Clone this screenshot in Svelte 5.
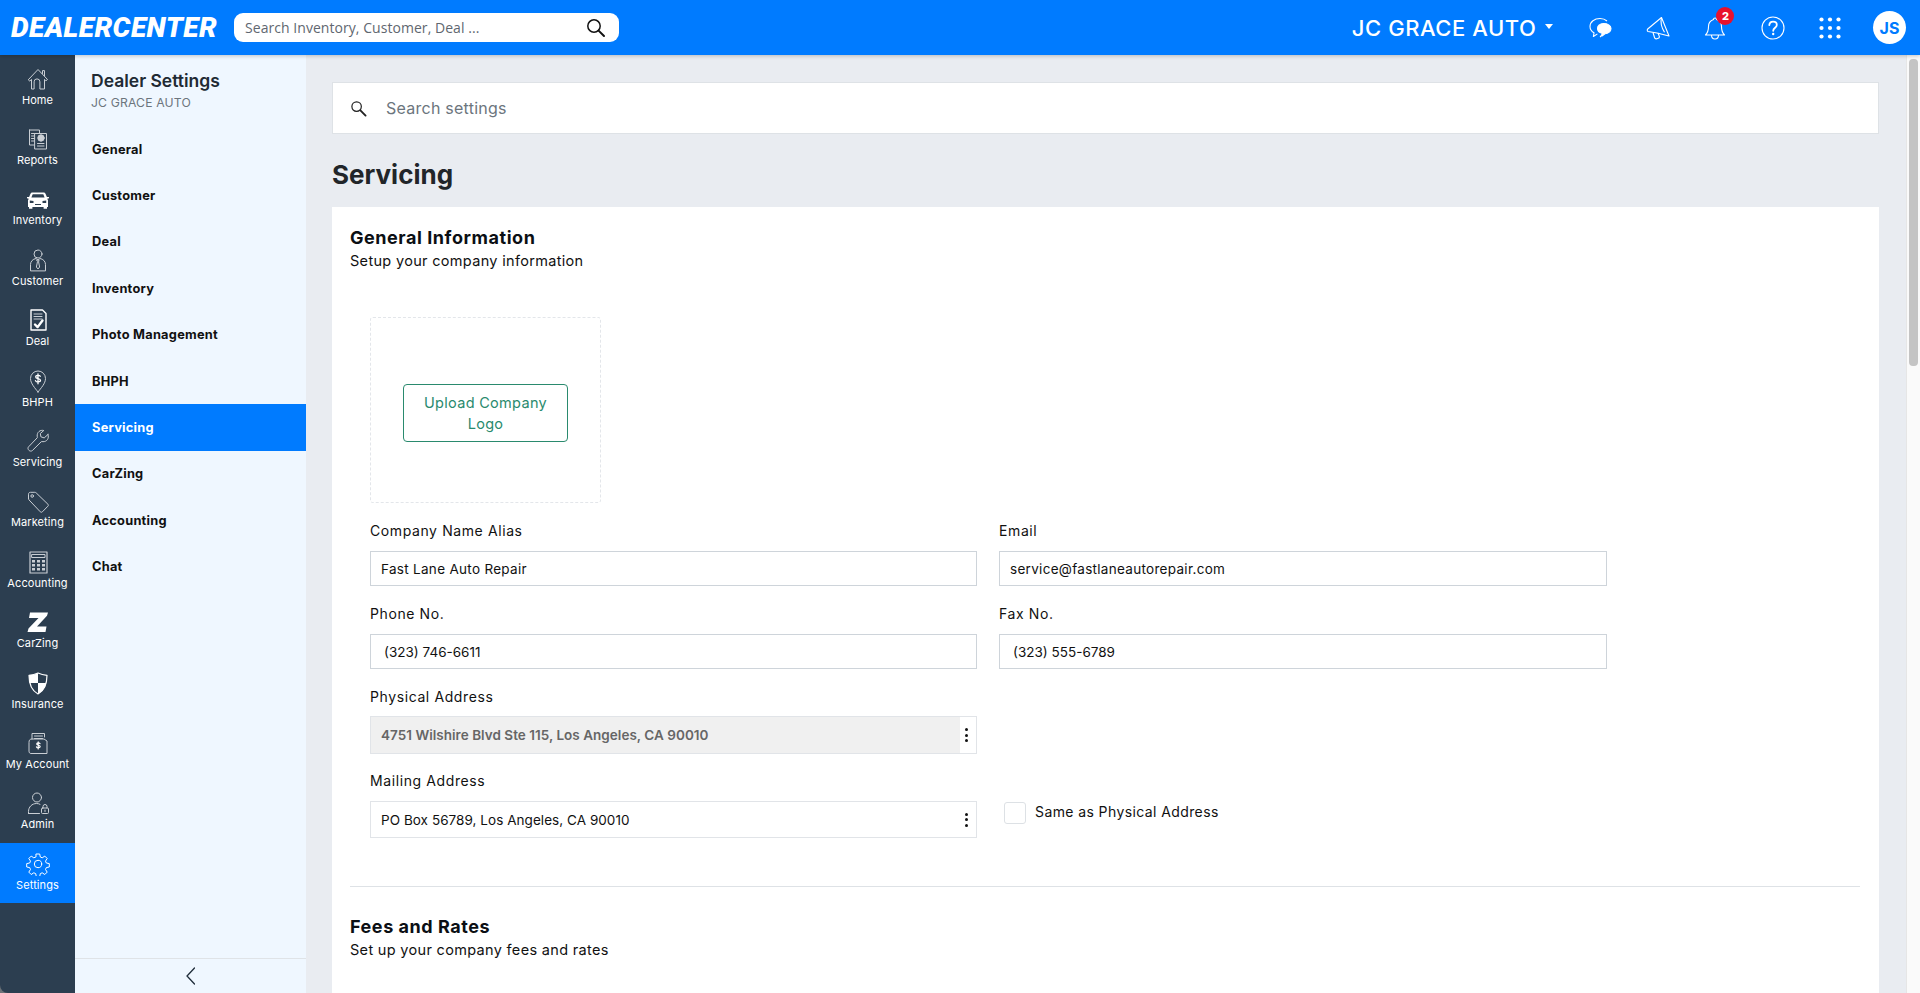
<script>
  const rail = [
    ['home','Home'],['reports','Reports'],['car','Inventory'],['customer','Customer'],['deal','Deal'],
    ['bhph','BHPH'],['wrench','Servicing'],['tag','Marketing'],['calc','Accounting'],['z','CarZing'],
    ['shield','Insurance'],['account','My Account'],['admin','Admin'],['gear','Settings']
  ];
  const menu = ['General','Customer','Deal','Inventory','Photo Management','BHPH','Servicing','CarZing','Accounting','Chat'];
</script>

{#snippet icon(n)}
  <svg class="ri" viewBox="0 0 24 24" fill="none" stroke="currentColor" stroke-width="1" stroke-linejoin="round" stroke-linecap="round">
    {#if n==='home'}
      <path d="M2.500 12.500 12 2.500l9.500 10-1.600 1.300-1.400-1.400V22h-4.600v-7.200a2.900 2.900 0 0 0-5.800 0V22H5.500v-9.600l-1.400 1.400z"/>
      <path d="M16.500 6.500V3.600h2v5"/>
    {:else if n==='reports'}
      <path d="M3.500 3h10v3.500M3.500 3v15H8"/>
      <path d="M5.500 6.500h3M5.500 9h3M5.500 11.500h3M5.500 14h3"/>
      <path d="M9 6.500h11.500V22H9z"/>
      <circle cx="15" cy="11" r="3.200" fill="currentColor"/>
      <path d="M11.500 16.500h6.500M11.500 19h6.500"/>
    {:else if n==='car'}
      <path fill="#fff" stroke="none" d="M6.200 4.500h11.600c.8 0 1.400.4 1.700 1.200l1.400 3.300h2.100v1.300l-1.800.4.800 1.500V19h-1v1.800h-3.400V19H6.400v1.800H3V19H2v-6.800l.8-1.500-1.800-.4V9h2.100l1.400-3.300c.3-.8.900-1.200 1.700-1.200z"/>
      <path fill="#2c3e50" stroke="none" d="M6.700 6.200h10.600l1.300 3.300H5.400zM3.800 12.500l3.700.5v2H3.800zM20.200 12.500l-3.700.5v2h3.700zM9 16h6v1H9z"/>
    {:else if n==='customer'}
      <circle cx="12" cy="6" r="4"/>
      <path d="M4.500 22.500v-6c0-3 2.300-5.500 5.500-6l2 1.500 2-1.500c3.200.5 5.500 3 5.500 6v6z"/>
      <path d="M11 12h2l-.4 2 1 5-1.600 2-1.600-2 1-5z"/>
    {:else if n==='deal'}
      <path stroke="#fff" stroke-width="1.400" d="M5 2h11.500L20 5.500V22H5z"/>
      <path d="M8 6h8M8 8.500h8M8 11h8"/>
      <path stroke="#fff" stroke-width="2.400" d="M9 16.500l2.600 2.600L16.500 12.500"/>
    {:else if n==='bhph'}
      <path d="M12 23C9 19 4.500 14.500 4.500 9.500a7.500 7.500 0 0 1 15 0C19.500 14.500 15 19 12 23z"/>
      <path stroke="#fff" stroke-width="1.300" d="M14.300 7.300c-.4-.7-1.200-1-2.300-1-1.300 0-2.300.6-2.300 1.600 0 2.200 4.800 1.200 4.800 3.400 0 1-1 1.600-2.500 1.600-1.300 0-2.100-.4-2.500-1.200M12 4.800v10"/>
    {:else if n==='wrench'}
      <path d="M22 5.500l-3.800 3.400-3.300-1.100-.6-3.300L17.800 1.500c-3.600-.9-7 1.700-6.600 5.700.1.700.2 1.200.1 1.500L2.600 17.800c-1.200 1.200-.5 2.700.3 3.500s2.400 1.200 3.500.2l8.900-8.800c.3-.2 1-.1 1.700 0 3.700.2 6.500-3.300 5-7.200z"/>
    {:else if n==='tag'}
      <path d="M2.500 8.500V4.200C2.500 3 3.300 2.300 4.500 2.300h4.300c.6 0 1 .2 1.400.6l11.700 11.300c.6.600.6 1.400 0 2l-5.500 5.600c-.6.600-1.500.6-2.100 0L3.100 10c-.4-.5-.6-.9-.6-1.500z"/>
      <circle cx="6.200" cy="6" r="1.300"/>
    {:else if n==='calc'}
      <rect x="4" y="2" width="17" height="21" stroke-width="1.200"/>
      <rect x="6" y="4.500" width="13" height="3"/>
      <g fill="currentColor" stroke="none">
        <rect x="6" y="10" width="3" height="2.500"/><rect x="11" y="10" width="3" height="2.500"/><rect x="16" y="10" width="3" height="2.500"/>
        <rect x="6" y="14" width="3" height="2.500"/><rect x="11" y="14" width="3" height="2.500"/><rect x="16" y="14" width="3" height="2.500"/>
        <rect x="6" y="18" width="3" height="2.500"/><rect x="11" y="18" width="3" height="2.500"/><rect x="16" y="18" width="3" height="2.500"/>
      </g>
    {:else if n==='z'}
      <path fill="#fff" stroke="none" d="M4 2.500h18l-1 3.300L11 16.500h9.500l-1 5.500H1.500l1-3.500L12.500 8H3z"/>
    {:else if n==='shield'}
      <path fill="#2c3e50" stroke="#fff" stroke-width="1.200" d="M12 2c3 1.500 6 2.100 9 2.300 0 8-1.400 14.700-9 18.700C4.400 19 3 12.300 3 4.300 6 4.100 9 3.500 12 2z"/>
      <path fill="#fff" stroke="none" d="M12 2c-3 1.500-6 2.100-9 2.300 0 2.800.2 5.400.8 7.700H12zM12 12v11c5-2.700 7.300-6.700 8.200-11z"/>
    {:else if n==='account'}
      <path d="M6 8V2.500h12.500V6"/>
      <path d="M8.500 5h8M8.500 7.500h8"/>
      <path d="M3 11c0-2 1-3 3-3h12l3 2v12.500H5c-1.200 0-2-.8-2-2z"/>
      <path stroke="#fff" stroke-width="1.200" d="M14 12.700c-.4-.6-1-.8-1.700-.8-1 0-1.600.5-1.600 1.200 0 1.600 3.500.8 3.500 2.500 0 .8-.8 1.200-1.800 1.200s-1.600-.3-1.900-.9M12.200 10.900v7"/>
    {:else if n==='admin'}
      <circle cx="11" cy="6.500" r="4.500"/>
      <path d="M2.500 22.500v-2c0-4.500 3.500-8 8-8 1.400 0 2.700.3 3.500.8M2.500 22.500h11"/>
      <rect x="15.500" y="17" width="7" height="5.500" rx="1"/>
      <path d="M17 17v-1.500a2 2 0 0 1 4 0V17M19 19v1.500"/>
    {:else if n==='gear'}
      <circle cx="12" cy="12" r="3.700"/>
      <path d="M10.300 2h3.400l.6 3 1.900.8 2.600-1.700 2.400 2.400-1.700 2.600.8 1.900 3 .6v3.400l-3 .6-.8 1.900 1.700 2.600-2.400 2.400-2.600-1.700-1.900.8-.6 3h-3.400l-.6-3-1.900-.8-2.600 1.700-2.400-2.400 1.700-2.600-.8-1.900-3-.6v-3.400l3-.6.800-1.900-1.700-2.600 2.400-2.400 2.600 1.700 1.900-.8z"/>
    {/if}
  </svg>
{/snippet}

<div class="app">
  <header class="top">
    <div class="logo">DEALERCENTER</div>
    <div class="gsearch">
      <span>Search Inventory, Customer, Deal ...</span>
      <svg viewBox="0 0 20 20" width="20" height="20" fill="none" stroke="#111" stroke-width="1.500" stroke-linecap="round"><circle cx="8" cy="8" r="6.200"/><path stroke-width="2" d="M12.600 12.600 18 18"/></svg>
    </div>
    <div class="grow"></div>
    <div class="dealer">JC GRACE AUTO</div>
    <span class="caret"></span>
    <div class="tools">
      <svg viewBox="0 0 24 24" width="24" height="24" fill="none" stroke="#fff" stroke-width="1.100" stroke-linejoin="round">
        <path d="M12 21c1-.8 1.700-1.600 2-2.500M12 2.500c-5.500 0-10 3.200-10 8 0 3 1.800 5 4 6.300l-.6 3.700 4-2.600"/>
        <path d="M19 5c-2-1.800-4.500-2.500-7-2.500"/>
        <path fill="#fff" d="M15.500 7.500c4 0 7.500 2 7.500 5s-2.800 5-6 5.200l-3 2.300v-2.700c-2.800-.7-4.500-2.400-4.500-4.800 0-3 2.500-5 6-5z"/>
      </svg>
      <svg viewBox="0 0 24 24" width="24" height="24" fill="none" stroke="#fff" stroke-width="1.100" stroke-linejoin="round">
        <path d="M15.500 1.500 23 20 11 17 2 15.500c-1-.5-1-2 0-2.800z"/>
        <path d="M15.500 1.500c-1 4 0 10 3 14.700"/>
        <path d="M7 16.500l1.500 5c.3 1 1.300 1.500 2.400 1.200l1.300-.4c1-.3 1.500-1.300 1-2.300L12 17"/>
      </svg>
      <svg viewBox="0 0 24 24" width="24" height="24" fill="none" stroke="#fff" stroke-width="1.100" stroke-linejoin="round">
        <path d="M12 2c-1 0-1.500.7-1.500 1.500C7.500 4.500 5.500 7 5.500 10.500c0 4-.5 6-3 8.500h19c-2.500-2.500-3-4.500-3-8.500 0-3.500-2-6-5-7C13.500 2.700 13 2 12 2z"/>
        <path d="M8.500 19c0 2.500 1.500 4 3.500 4s3.500-1.500 3.500-4"/>
      </svg>
      <svg viewBox="0 0 24 24" width="24" height="24" fill="none" stroke="#fff" stroke-width="1.100">
        <circle cx="12" cy="12" r="11"/>
        <path stroke-width="1.800" stroke-linecap="round" d="M8.300 9.200C8.500 6.900 10 5.700 12.100 5.700c2.200 0 3.700 1.400 3.700 3.200 0 2.700-3.600 3-3.600 5.900"/>
        <circle cx="12.200" cy="18" r="1.200" fill="#fff" stroke="none"/>
      </svg>
      <svg class="dots" viewBox="0 0 22 22" width="22" height="22" fill="#fff">
        {#each [2.500,11,19.500] as y}{#each [2.500,11,19.500] as x}<circle cx={x} cy={y} r="2.100"/>{/each}{/each}
      </svg>
      <span class="badge">2</span>
    </div>
    <div class="avatar">JS</div>
  </header>

  <div class="body">
    <nav class="rail">
      {#each rail as [ic, label]}
        <div class="rail-item" class:on={label==='Settings'}>
          {@render icon(ic)}
          <span>{label}</span>
        </div>
      {/each}
    </nav>

    <aside class="side">
      <div class="side-head">
        <h2>Dealer Settings</h2>
        <p>JC GRACE AUTO</p>
      </div>
      <ul>
        {#each menu as m}
          <li class:active={m==='Servicing'}>{m}</li>
        {/each}
      </ul>
      <div class="collapse">
        <svg viewBox="0 0 12 20" width="12" height="20" fill="none" stroke="#1f2d3a" stroke-width="1.300" stroke-linecap="round"><path d="M9.500 2 2 10l7.500 8"/></svg>
      </div>
    </aside>

    <main class="main">
      <div class="ssearch">
        <svg viewBox="0 0 18 18" width="17" height="17" fill="none" stroke="#222" stroke-width="1.300" stroke-linecap="round"><circle cx="7" cy="7" r="5"/><path stroke-width="2" d="M11 11l5.500 5.500"/></svg>
        <span>Search settings</span>
      </div>
      <h1>Servicing</h1>
      <section class="card">
        <h3>General Information</h3>
        <p class="sub">Setup your company information</p>

        <div class="logo-drop">
          <button class="upload">Upload Company Logo</button>
        </div>

        <div class="form">
          <div class="cell">
            <div class="lbl">Company Name Alias</div>
            <div class="inp">Fast Lane Auto Repair</div>
          </div>
          <div class="cell">
            <div class="lbl">Email</div>
            <div class="inp">service@fastlaneautorepair.com</div>
          </div>
          <div class="cell">
            <div class="lbl">Phone No.</div>
            <div class="inp ph">(323) 746-6611</div>
          </div>
          <div class="cell">
            <div class="lbl">Fax No.</div>
            <div class="inp ph">(323) 555-6789</div>
          </div>
          <div class="cell">
            <div class="lbl tight">Physical Address</div>
            <div class="addr a1">
              <div class="addr-text disabled">4751 Wilshire Blvd Ste 115, Los Angeles, CA 90010</div>
              <div class="kebab"><i></i><i></i><i></i></div>
            </div>
          </div>
          <div class="cell"></div>
          <div class="cell r4">
            <div class="lbl">Mailing Address</div>
            <div class="addr a2">
              <div class="addr-text">PO Box 56789, Los Angeles, CA 90010</div>
              <div class="kebab"><i></i><i></i><i></i></div>
            </div>
          </div>
          <div class="cell r4 same">
            <span class="check"></span>
            <span>Same as Physical Address</span>
          </div>
        </div>

        <hr />
        <h3 class="fees">Fees and Rates</h3>
        <p class="sub">Set up your company fees and rates</p>
      </section>
    </main>

    <div class="scrollbar"><div class="thumb"></div></div>
  </div>
</div>

<style>
  :global(body) { margin: 0; background: #6d7278; }
  * { box-sizing: border-box; }
  .app {
    height: 993px; display: flex; flex-direction: column; overflow: hidden;
    font-family: Inter, "Noto Sans", sans-serif; color: #111;
    border-bottom-left-radius: 8px;
  }
  .top {
    height: 55px; flex: none; background: #007bff; display: flex; align-items: center;
    position: relative; z-index: 2; box-shadow: 0 1px 4px rgba(0,0,0,.22);
    padding: 0 14px 0 11px;
  }
  .logo { width: 223px; font: italic 900 28px/1 Roboto, sans-serif; color: #fff; letter-spacing: .45px; white-space: nowrap; }
  .gsearch {
    width: 385px; height: 29px; background: #fff; border-radius: 9px; display: flex; align-items: center;
    justify-content: space-between; padding: 0 13px 0 11px;
    font: 14px/1 "Open Sans", sans-serif; letter-spacing: .05px; color: #5f6770;
  }
  .grow { flex: 1; }
  .dealer { color: #fff; font-size: 22px; font-weight: 500; letter-spacing: .55px; }
  .caret { margin: 0 0 2px 9px; width: 0; height: 0; border-left: 4.500px solid transparent; border-right: 4.500px solid transparent; border-top: 5px solid #fff; }
  .tools { position: relative; display: flex; gap: 33.400px; margin: 0 32px 0 35px; align-items: center; }
  .dots { margin-left: 1px; }
  .badge {
    position: absolute; left: 128px; top: -9px; width: 18px; height: 18px; border-radius: 50%;
    background: #e8112d; color: #fff; font-size: 11px; font-weight: 800; display: flex; align-items: center; justify-content: center;
  }
  .avatar { width: 33px; height: 33px; border-radius: 50%; background: #fff; color: #007bff; font-weight: 700; font-size: 16px; display: flex; align-items: center; justify-content: center; }

  .body { flex: 1; display: flex; min-height: 0; }
  .rail { width: 75px; flex: none; background: #2c3e50; padding-top: 2.800px; color: #fff; }
  .rail-item { height: 60.400px; display: flex; flex-direction: column; align-items: center; padding-top: 9px; }
  .rail-item span { margin-top: 1.800px; line-height: 14px; font-size: 11px; font-weight: 400; letter-spacing: .1px; white-space: nowrap; }
  .rail-item.on { background: #007bff; }
  .ri { width: 24px; height: 24px; color: #c9ced4; display: block; }
  .rail-item.on .ri { color: #fff; }

  .side { width: 231px; flex: none; background: #eff7ff; display: flex; flex-direction: column; box-shadow: 1px 0 3px rgba(0,0,0,.05); }
  .side-head { padding: 16px 0 0 16px; height: 71px; }
  .side h2 { margin: 0; font-size: 17.500px; font-weight: 600; line-height: 20px; color: #212a33; }
  .side p { margin: 4px 0 0; font-size: 12.200px; line-height: 16px; color: #6c757d; letter-spacing: .15px; }
  .side ul { list-style: none; margin: 0; padding: 0; flex: 1; }
  .side li { height: 46.400px; display: flex; align-items: center; padding-left: 17px; font-size: 12.800px; font-weight: 700; letter-spacing: .25px; color: #111; }
  .side li.active { background: #007bff; color: #fff; }
  .collapse { height: 35px; border-top: 1px solid #dfe3e7; display: flex; align-items: center; justify-content: center; }

  .main { flex: 1; background: #e9ecf1; padding: 27px 27px 0 26px; min-width: 0; display: flex; flex-direction: column; }
  .ssearch { height: 52px; background: #fff; border: 1px solid #dee2e6; display: flex; align-items: center; padding-left: 17px; gap: 19px; font-size: 16px; color: #6c757d; letter-spacing: .25px; }
  .main h1 { margin: 0; height: 73px; padding-top: 7px; display: flex; align-items: center; font-size: 26px; font-weight: 700; color: #212529; }
  .card { flex: 1; background: #fff; padding: 20px 19px 0 18px; }
  .card h3 { margin: 0; font-size: 18px; font-weight: 700; line-height: 22px; letter-spacing: .55px; color: #0b0f14; }
  .sub { margin: 2px 0 0; font-size: 14.500px; line-height: 20px; letter-spacing: .32px; color: #111; }
  .logo-drop { width: 231px; height: 186px; margin: 46px 0 0 20px; border: 1px dashed #e3e6ea; border-radius: 3px; display: flex; align-items: center; justify-content: center; padding-top: 6px; }
  .upload { width: 165px; height: 58px; background: #fff; border: 1px solid #2a8a6e; border-radius: 4px; color: #2a8a6e; font: 14.500px/21px Inter, sans-serif; padding: 0 18px; letter-spacing: .3px; }
  .form { margin: 18px 0 0 20px; width: 1237px; display: grid; grid-template-columns: 607px 608px; column-gap: 22px; row-gap: 18px; }
  .lbl { font-size: 14px; line-height: 20px; margin-bottom: 10px; letter-spacing: .6px; color: #111; }
  .lbl.tight { margin-bottom: 9px; }
  .r4 { margin-top: -1px; }
  .inp { height: 35px; border: 1px solid #ced4da; padding: 0 10px; display: flex; align-items: center; font-size: 13.500px; letter-spacing: .3px; }
  .inp.ph { padding-left: 13px; letter-spacing: 0; }
  .addr { border: 1px solid #e1e4e8; display: flex; }
  .a1 { height: 38px; }
  .a2 { height: 37px; }
  .addr-text { flex: 1; padding: 0 10px; display: flex; align-items: center; font-size: 13.500px; letter-spacing: .05px; }
  .addr-text.disabled { background: #f0f0f0; color: #666; font-weight: 600; letter-spacing: .03px; }
  .kebab { width: 16px; padding-right: 3px; display: flex; flex-direction: column; align-items: center; justify-content: center; gap: 2.500px; }
  .kebab i { width: 3px; height: 3px; border-radius: 50%; background: #111; display: block; }
  .same { padding: 31px 0 0 5px; display: flex; align-items: flex-start; gap: 9px; font-size: 14px; letter-spacing: .4px; line-height: 20px; }
  .check { width: 22px; height: 22px; border: 1px solid #dde1e5; border-radius: 3px; background: #fff; flex: none; }
  hr { margin: 48px 0 0; border: 0; border-top: 1px solid #dee2e6; }
  .card h3.fees { margin-top: 29px; }

  .scrollbar { width: 14px; flex: none; background: #fafafa; border-left: 1px solid #e6e6e6; padding: 4px 2px 0 2px; }
  .thumb { height: 307px; background: #c4c4c4; border-radius: 4px; }
</style>
